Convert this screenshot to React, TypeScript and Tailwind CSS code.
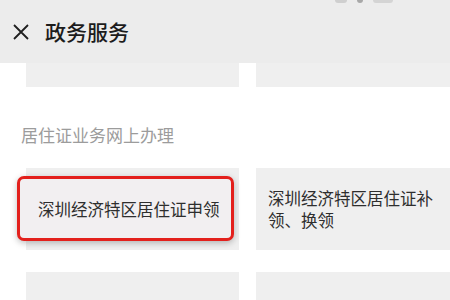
import React from "react";

export default function App() {
  return (
    <div
      className="relative w-[450px] h-[300px] overflow-hidden bg-white"
      style={{ fontFamily: '"Noto Sans CJK SC", "Noto Sans", sans-serif' }}
    >
      <div className="relative h-[63px] bg-[#ececec] flex items-center pl-[13px]">
        <div className="absolute top-0 left-[335px] flex gap-[10px]">
          <div className="w-[12px] h-[3px] bg-[#cfcfcf] rounded-b" />
          <div className="w-[6px] h-[3px] bg-[#a8a8a8] rounded-b" />
          <div className="w-[20px] h-[3px] bg-[#d4d4d4] rounded-b" />
        </div>
        <svg width="16" height="16" viewBox="0 0 16 16" className="shrink-0">
          <path d="M1 1 L15 15 M15 1 L1 15" stroke="#1f1f1f" strokeWidth="1.8" fill="none" />
        </svg>
        <span className="ml-[16px] text-[21px] leading-none font-medium text-[#1c1c1c]">政务服务</span>
      </div>

      <div className="flex pl-[26px] gap-[17px]">
        <div className="w-[213px] h-[24px] bg-[#efefef] shrink-0" />
        <div className="w-[194px] h-[24px] bg-[#efefef] shrink-0" />
      </div>

      <div className="mt-[35px] pl-[21px] h-[24px] flex items-center text-[17px] leading-none text-[#9c9c9c]">
        居住证业务网上办理
      </div>

      <div className="mt-[22px] flex pl-[26px] gap-[17px]">
        <div className="relative w-[213px] h-[82px] bg-[#efefef] shrink-0 flex items-center pl-[12px]">
          <div className="absolute left-[-9px] top-[8px] w-[217px] h-[65px] rounded-[7px] border-[3px] border-[#e3201c] bg-[#f2eff1] shadow-[0_2px_6px_rgba(0,0,0,0.25)]" />
          <span className="relative text-[16.5px] leading-[22px] text-[#2e2e2e] whitespace-nowrap">深圳经济特区居住证申领</span>
        </div>
        <div className="w-[194px] h-[82px] bg-[#efefef] shrink-0 flex items-center px-[12px]">
          <span className="text-[16.5px] leading-[22px] text-[#2e2e2e]">深圳经济特区居住证补领、换领</span>
        </div>
      </div>

      <div className="mt-[22px] flex pl-[26px] gap-[17px]">
        <div className="w-[213px] h-[40px] bg-[#efefef] shrink-0" />
        <div className="w-[194px] h-[40px] bg-[#efefef] shrink-0" />
      </div>
    </div>
  );
}
